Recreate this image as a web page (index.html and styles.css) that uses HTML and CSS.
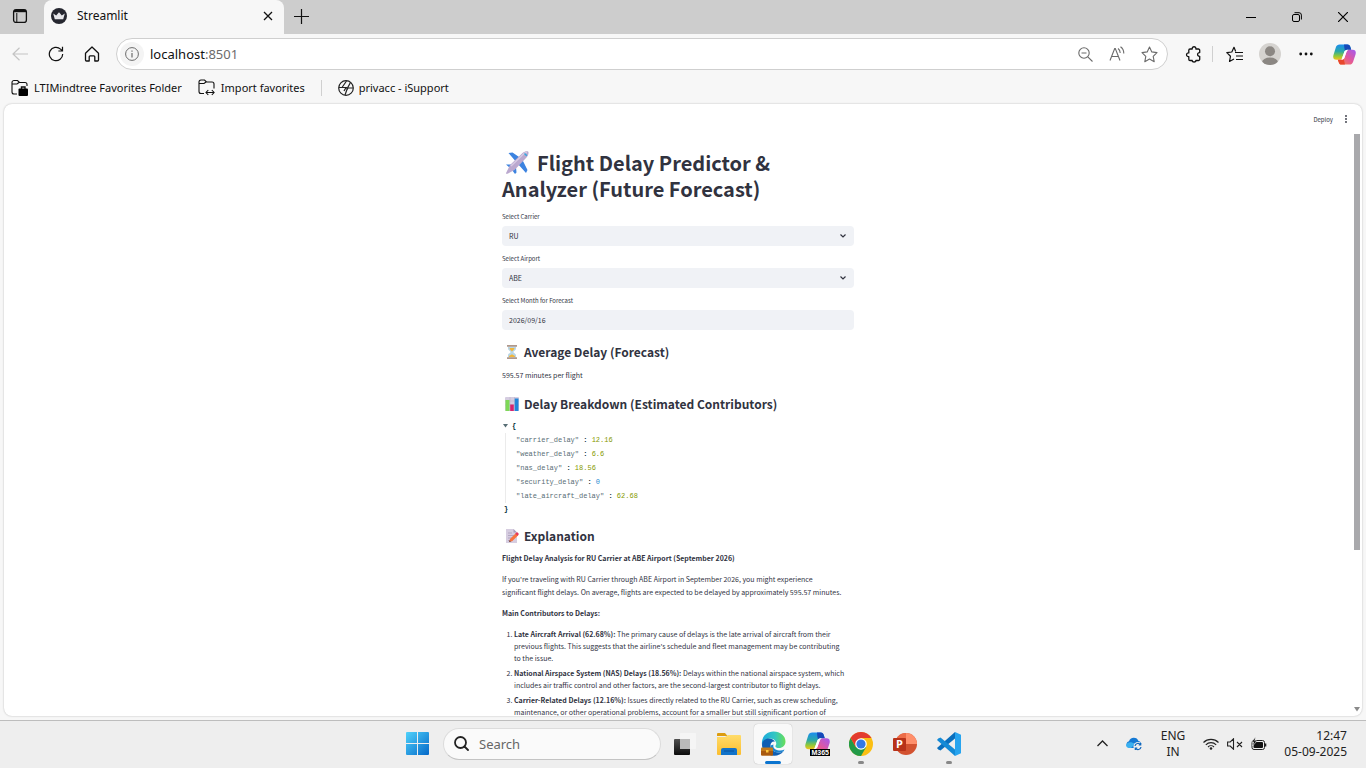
FILE: index.html
```
<!DOCTYPE html>
<html lang="en">
<head>
<meta charset="utf-8">
<title>Streamlit</title>
<link rel="stylesheet" href="styles.css">
</head>
<body>
<svg class="defs" width="0" height="0" aria-hidden="true">
  <defs>
    <linearGradient id="cpBlue" x1="0" y1="0" x2="0" y2="1"><stop offset="0" stop-color="#1b8df0"/><stop offset=".45" stop-color="#2aa8a8"/><stop offset=".75" stop-color="#8fc93a"/><stop offset="1" stop-color="#f6c21c"/></linearGradient>
    <linearGradient id="cpPink" x1="1" y1="0" x2="0" y2="1"><stop offset="0" stop-color="#a259f2"/><stop offset=".5" stop-color="#e3589b"/><stop offset="1" stop-color="#f98a3c"/></linearGradient>
    <linearGradient id="winBlue" x1="0" y1="0" x2="1" y2="1"><stop offset="0" stop-color="#4fd2fb"/><stop offset="1" stop-color="#0468c8"/></linearGradient>
    <linearGradient id="folder" x1="0" y1="0" x2="0" y2="1"><stop offset="0" stop-color="#ffdc6a"/><stop offset="1" stop-color="#fbbd2f"/></linearGradient>
    <linearGradient id="edgeTop" x1="0" y1="0" x2="1" y2="0"><stop offset="0" stop-color="#1da8dd"/><stop offset=".55" stop-color="#32c6c3"/><stop offset="1" stop-color="#69df57"/></linearGradient>
    <linearGradient id="taskBack" x1="0" y1="0" x2="0" y2="1"><stop offset="0" stop-color="#505050"/><stop offset="1" stop-color="#0b0b0b"/></linearGradient>
    <symbol id="copilot" viewBox="0 0 24 24">
      <path d="M7 1.500h8c2 0 2.600 1 3.200 3l.8 2.500h-4c-2 0-2.800 1-3.400 3L9.700 15c-.5 1.500-1.400 2.500-3.200 2.500H3.500c-3 0-3.800-2-3-5L3 4.500c.7-2 2-3 4-3z" fill="url(#cpBlue)"/>
      <path d="M11.500 1.500H15c2 0 2.600 1 3.200 3L19 7h-4c-1.200 0-2 .4-2.500 1.200L11.800 5z" fill="#1649b8"/>
      <path d="M17 22.500H9c-2 0-2.600-1-3.200-3L5 17.500h3.500c2 0 3-1 3.600-3L14 9.500c.6-1.800 1.500-2.500 3-2.500h3.500c3 0 3.800 2 3 5L21 19.500c-.7 2-2 3-4 3z" fill="url(#cpPink)"/>
      <path d="M5 17.500h3.500c1.200 0 2-.4 2.600-1.200l1.400 6.200H9c-2 0-2.600-1-3.200-3z" fill="#e8472d"/>
      <path d="M15.500 7h1c-1.400.3-2 1.200-2.500 2.500L12.100 15c-.5 1.500-1.500 2.500-3.600 2.500 1-.5 1-1.500 1.200-2.500l1.900-5c.6-2 1.700-3 3.900-3z" fill="#fff"/>
    </symbol>
  </defs>
</svg>

<header class="browser">
  <div class="tabstrip">
    <button class="icon-btn workspaces" aria-label="Tab actions">
      <svg width="16" height="16" viewBox="0 0 16 16" fill="none" stroke="#111" stroke-width="1.300"><rect x="1.600" y="1.600" width="12.800" height="12.800" rx="2.500"/><path d="M2 3h12" stroke-width="2.400"/><path d="M4.800 5v9.400" stroke-width="1"/></svg>
    </button>
    <div class="tab">
      <svg width="16" height="16" viewBox="0 0 16 16"><circle cx="8" cy="8" r="8" fill="#262730"/><path d="M2.200 5.600l3 2L8 4.200l2.800 3.400 3-2-1.600 5.600H3.800z" fill="#e8e8ec"/></svg>
      <span class="tab-title">Streamlit</span>
      <button class="icon-btn tab-close" aria-label="Close tab"><svg width="10" height="10" viewBox="0 0 10 10" stroke="#111" stroke-width="1.300"><path d="M1 1l8 8M9 1L1 9"/></svg></button>
    </div>
    <button class="icon-btn new-tab" aria-label="New tab"><svg width="15" height="15" viewBox="0 0 15 15" stroke="#111" stroke-width="1.200"><path d="M7.500 0v15M0 7.500h15"/></svg></button>
    <div class="window-controls">
      <button class="icon-btn win-btn" aria-label="Minimize"><svg width="10" height="10" viewBox="0 0 10 10" stroke="#000"><path d="M0 5.500h10"/></svg></button>
      <button class="icon-btn win-btn" aria-label="Restore"><svg width="10" height="10" viewBox="0 0 10 10" stroke="#000" fill="none"><rect x=".5" y="2.500" width="7" height="7" rx="1.500"/><path d="M2.500 .7h4.500a2.400 2.400 0 0 1 2.400 2.400v4.400"/></svg></button>
      <button class="icon-btn win-btn" aria-label="Close"><svg width="10" height="10" viewBox="0 0 10 10" stroke="#000" stroke-width="1.200"><path d="M0 0l10 10M10 0L0 10"/></svg></button>
    </div>
  </div>

  <div class="toolbar">
    <button class="icon-btn nav-btn" aria-label="Back"><svg width="16" height="14" viewBox="0 0 16 14" fill="none" stroke="#c4c4c4" stroke-width="1.200"><path d="M16 7H1M7.500 .8L1 7l6.500 6.200"/></svg></button>
    <button class="icon-btn nav-btn" aria-label="Refresh"><svg width="16" height="16" viewBox="0 0 17 17" fill="none" stroke="#111" stroke-width="1.300"><path d="M15.600 8.500A7.100 7.100 0 1 1 13.300 3.300L15.300 5.200M15.400 .8v4.500H11"/></svg></button>
    <button class="icon-btn nav-btn" aria-label="Home"><svg width="16" height="16" viewBox="0 0 16 16" fill="none" stroke="#111" stroke-width="1.300" stroke-linejoin="round"><path d="M1.500 7.200L8 1l6.500 6.200V14a1 1 0 0 1-1 1h-2.700v-4.200a1 1 0 0 0-1-1H6.200a1 1 0 0 0-1 1V15H2.500a1 1 0 0 1-1-1z"/></svg></button>
    <div class="address">
      <button class="icon-btn site-info" aria-label="Site information"><svg width="14" height="14" viewBox="0 0 14 14" fill="none" stroke="#6b6b6b"><circle cx="7" cy="7" r="6.400"/><path d="M7 6v4.500M7 3.500v1.300" stroke-width="1.200"/></svg></button>
      <a class="url" href="#">localhost<span>:8501</span></a>
      <button class="icon-btn addr-btn" aria-label="Zoom"><svg width="15" height="15" viewBox="0 0 15 15" fill="none" stroke="#6b6b6b" stroke-width="1.100"><circle cx="6" cy="6" r="5.200"/><path d="M9.800 9.800l4.700 4.700M3.500 6h5"/></svg></button>
      <button class="icon-btn addr-btn" aria-label="Read aloud"><svg width="16" height="16" viewBox="0 0 16 16" fill="none" stroke="#6b6b6b" stroke-width="1.100"><path d="M1 14.500L5.700 2.500h.6l4.700 12M2.600 10.500h6.800M9 2.500c1.500 1 2.200 2.500 2.200 4.500M11.500 .8c2.200 1.500 3.300 3.700 3.300 6.700"/></svg></button>
      <button class="icon-btn addr-btn" aria-label="Add to favorites"><svg width="17" height="17" viewBox="0 0 17 17" fill="none" stroke="#6b6b6b" stroke-width="1.100" stroke-linejoin="round"><path d="M8.500 1l2.300 4.900 5.200.7-3.800 3.700 1 5.400-4.700-2.600-4.700 2.600 1-5.400L1 6.600l5.200-.7z"/></svg></button>
    </div>
    <button class="icon-btn ext-btn" aria-label="Extensions"><svg width="17" height="17" viewBox="0 0 17 17" fill="none" stroke="#111" stroke-width="1.300" stroke-linejoin="round"><path d="M5 3h2.200c-.3-3 4-3 3.700 0H13.500a1.200 1.200 0 0 1 1.200 1.200v2.400c-2.800-.2-2.800 3.900 0 3.700v3a1.200 1.200 0 0 1-1.200 1.200h-2.600c.3 2-4 2-3.700 0H5a1.200 1.200 0 0 1-1.200-1.200v-2.700c-3 .3-3-4 0-3.700V4.200A1.200 1.200 0 0 1 5 3z"/></svg></button>
    <span class="divider"></span>
    <button class="icon-btn tool-btn" aria-label="Favorites"><svg width="17" height="17" viewBox="0 0 17 17" fill="none" stroke="#111" stroke-width="1.200" stroke-linejoin="round"><path d="M9.700 5.500L8 1.300 5.800 6l-5 .6 3.700 3.600-1 5.300L8 13M9 6.500h8M10 10h7M10 13.500h7"/></svg></button>
    <button class="icon-btn tool-btn" aria-label="Profile"><svg width="22" height="22" viewBox="0 0 22 22"><clipPath id="av"><circle cx="11" cy="11" r="11"/></clipPath><g clip-path="url(#av)"><path fill="#d5d3d0" d="M0 0h22v22H0z"/><circle cx="11" cy="8.300" r="5" fill="#8b8783"/><ellipse cx="11" cy="19.500" rx="8" ry="5" fill="#8b8783"/></g></svg></button>
    <button class="icon-btn tool-btn" aria-label="Settings and more"><svg width="14" height="4" viewBox="0 0 14 4" fill="#111"><circle cx="1.700" cy="2" r="1.400"/><circle cx="7" cy="2" r="1.400"/><circle cx="12.300" cy="2" r="1.400"/></svg></button>
    <button class="icon-btn copilot-btn" aria-label="Copilot"><svg width="23" height="23"><use href="#copilot"/></svg></button>
  </div>

  <nav class="bookmarks">
    <a href="#"><svg width="18" height="18" viewBox="0 0 18 18" fill="none" stroke="#111" stroke-width="1.100"><path d="M6 15H3a2 2 0 0 1-2-2V3.500a2 2 0 0 1 2-2h3.500l2 2H14a2 2 0 0 1 2 2V7M1 5h5l2-1.500"/><rect x="7.500" y="9.500" width="9.500" height="7.500" rx="1" fill="#000" stroke="none"/><path d="M10.500 10V8h3.500v2" stroke-width="1.400"/></svg>LTIMindtree Favorites Folder</a>
    <a href="#"><svg width="18" height="18" viewBox="0 0 18 18" fill="none" stroke="#111" stroke-width="1.100"><path d="M6 14.500H3a2 2 0 0 1-2-2V3a2 2 0 0 1 2-2h3.500l2 2H14a2 2 0 0 1 2 2v4.500M1 4.500h5L8 3M8 13.500h8M10.300 11L8 13.500l2.300 2.500M13.800 11l2.300 2.500-2.300 2.500"/></svg>Import favorites</a>
    <span class="divider"></span>
    <a href="#"><svg width="16" height="16" viewBox="0 0 16 16" fill="none" stroke="#222" stroke-width="1.200"><circle cx="8" cy="8" r="7.300"/><path d="M1 7.500h7L6 11M15 8H9.500l3-5.500M8.500 1L4 7.500M8 8h1.500L7 15M10 8l-2 3.500"/></svg>privacc - iSupport</a>
  </nav>
</header>

<div class="page">
  <div class="app-bar">
    <button class="deploy">Deploy</button>
    <button class="icon-btn" aria-label="Main menu"><svg width="4" height="8" viewBox="0 0 4 8" fill="#31333f"><circle cx="2" cy="1" r=".9"/><circle cx="2" cy="4" r=".9"/><circle cx="2" cy="7" r=".9"/></svg></button>
  </div>
  <div class="scroller">
    <main class="app">
      <div class="column">
        <h1><svg class="emoji-lg" viewBox="0 0 24 24"><path d="M3.500 2l4-.5L17 8l-4.500 4.500zM22.500 19l-1.500 3-8.500-9.500L17 8z" fill="#3c83e0"/><path d="M1 13.500l6 0-1.500 4zM10 23l1.500-1.500L11 16l-4 3z" fill="#3c83e0"/><path d="M5 14L17.500 2c2-1.800 5-2 5.800-1.300.6.900.2 3.800-1.800 5.800L9.500 19l-7 3.800c-1 .4-1.800-.2-1.200-1.200z" fill="#bba9cf"/><path d="M6 15L18.500 3c1.500-1.300 2.500-1.500 3.500-1.500" stroke="#d6cae3" stroke-width="1.500" fill="none"/><path d="M19.500 2.500l2.300 2.200" stroke="#31a7e0" stroke-width="1.500"/></svg>Flight Delay Predictor &amp;<br>Analyzer (Future Forecast)</h1>

        <div class="field">
          <label for="carrier">Select Carrier</label>
          <div class="select-wrap">
            <select id="carrier"><option>RU</option></select>
            <svg class="chevron" width="6" height="4" viewBox="0 0 6 4" fill="none" stroke="#31333f" stroke-width="1.200"><path d="M.5 .5L3 3 5.500 .5"/></svg>
          </div>
        </div>
        <div class="field">
          <label for="airport">Select Airport</label>
          <div class="select-wrap">
            <select id="airport"><option>ABE</option></select>
            <svg class="chevron" width="6" height="4" viewBox="0 0 6 4" fill="none" stroke="#31333f" stroke-width="1.200"><path d="M.5 .5L3 3 5.500 .5"/></svg>
          </div>
        </div>
        <div class="field">
          <label for="month">Select Month for Forecast</label>
          <input id="month" type="text" value="2026/09/16">
        </div>

        <h3><svg class="emoji" viewBox="0 0 14 14"><path d="M3 1.500h8v2.300c0 1.500-2.200 2-2.700 3.200.5 1.200 2.700 1.700 2.700 3.200v2.300H3v-2.300C3 8.700 5.200 8.200 5.700 7 5.200 5.800 3 5.300 3 3.800z" fill="#b9d6e6"/><path d="M4.500 3h5c0 1.800-2 2.200-2.500 3.500C6.500 5.200 4.500 4.800 4.500 3zM4 12c0-2 2.500-1.800 3-3 .5 1.200 3 1 3 3z" fill="#f2b63a"/><path d="M2 0h10v1.800H2zM2 12.200h10V14H2z" fill="#b0988a"/></svg>Average Delay (Forecast)</h3>
        <p>595.57 minutes per flight</p>

        <h3><svg class="emoji" viewBox="0 0 14 14"><rect width="14" height="14" rx="1" fill="#d5cde0"/><path d="M0 4h14M0 8h14M5 0v14M9.500 0v14" stroke="#b9afc9" stroke-width=".5"/><path d="M.5 3H4.500v11H.5z" fill="#7ed957"/><path d="M5.200 7.500h3.600V14H5.200z" fill="#d6246e"/><path d="M9.700 1.500h3.800V14H9.700z" fill="#2185d9"/></svg>Delay Breakdown (Estimated Contributors)</h3>
        <div class="json">
          <div class="json-open"><svg width="5" height="4" viewBox="0 0 5 4"><path d="M0 0h5L2.500 3.500z" fill="#586e75"/></svg><b>{</b></div>
          <ul>
            <li>"carrier_delay" <b>:</b> <span class="float">12.16</span></li>
            <li>"weather_delay" <b>:</b> <span class="float">6.6</span></li>
            <li>"nas_delay" <b>:</b> <span class="float">18.56</span></li>
            <li>"security_delay" <b>:</b> <span class="int">0</span></li>
            <li>"late_aircraft_delay" <b>:</b> <span class="float">62.68</span></li>
          </ul>
          <b class="json-close">}</b>
        </div>

        <h3><svg class="emoji" viewBox="0 0 14 14"><path d="M1 0h7.500L12 3.500V14H1z" fill="#d6cde0"/><path d="M8.500 0v3.500H12z" fill="#a99dbb"/><path d="M3 4h4M3 6.500h6M3 9h4M3 11.500h3" stroke="#a99dbb" stroke-width=".8"/><path d="M4 13l1-3 6-6 2.300 2.200-6.200 6z" fill="#f8733f"/><path d="M10.300 4.700L12 3l2 2-1.500 1.800z" fill="#e5345c"/><path d="M4 13l.6-1.800L6 12.400z" fill="#5b4b50"/></svg>Explanation</h3>
        <p><strong>Flight Delay Analysis for RU Carrier at ABE Airport (September 2026)</strong></p>
        <p>If you're traveling with RU Carrier through ABE Airport in September 2026, you might experience<br>significant flight delays. On average, flights are expected to be delayed by approximately 595.57 minutes.</p>
        <p><strong>Main Contributors to Delays:</strong></p>
        <ol>
          <li><strong>Late Aircraft Arrival (62.68%):</strong> The primary cause of delays is the late arrival of aircraft from their<br>previous flights. This suggests that the airline's schedule and fleet management may be contributing<br>to the issue.</li>
          <li><strong>National Airspace System (NAS) Delays (18.56%):</strong> Delays within the national airspace system, which<br>includes air traffic control and other factors, are the second-largest contributor to flight delays.</li>
          <li><strong>Carrier-Related Delays (12.16%):</strong> Issues directly related to the RU Carrier, such as crew scheduling,<br>maintenance, or other operational problems, account for a smaller but still significant portion of</li>
        </ol>
      </div>
    </main>
    <div class="scrollbar"><span class="thumb"></span><svg width="6" height="5" viewBox="0 0 6 5"><path d="M0 0h6L3 4.500z" fill="#8a8a8a"/></svg></div>
  </div>
</div>

<footer class="taskbar">
  <div class="dock">
    <button class="icon-btn slot" aria-label="Start"><svg width="23" height="23" viewBox="0 0 23 23" fill="url(#winBlue)"><path d="M1 0h10v11H0V1a1 1 0 0 1 1-1zM12 0h10a1 1 0 0 1 1 1v10H12zM0 12h11v11H1a1 1 0 0 1-1-1zM12 12h11v10a1 1 0 0 1-1 1H12z"/></svg></button>
    <label class="search">
      <svg width="15" height="15" viewBox="0 0 15 15" fill="none" stroke="#222" stroke-width="1.800" stroke-linecap="round"><circle cx="6.500" cy="6.500" r="5.500"/><path d="M10.500 10.500L14 14"/></svg>
      <input type="text" placeholder="Search" aria-label="Search">
    </label>
    <button class="icon-btn slot" aria-label="Task view"><svg width="22" height="22" viewBox="0 0 22 22"><rect x="0" y="6" width="16" height="16" rx="1" fill="url(#taskBack)"/><rect x="6" y="0" width="16" height="16" rx="1" fill="#f5f5f5" fill-opacity=".93"/><path d="M6 6h10v10H6z" fill="#b9b9b9"/></svg></button>
    <button class="icon-btn slot" aria-label="File Explorer"><svg width="24" height="22" viewBox="0 0 24 22"><path d="M1 0h7l2.500 3H0V1a1 1 0 0 1 1-1z" fill="#dc9c10"/><path d="M0 4h8l3-2h12a1 1 0 0 1 1 1v18a1 1 0 0 1-1 1H1a1 1 0 0 1-1-1z" fill="url(#folder)"/><path d="M4 22v-5a2 2 0 0 1 2-2h12a2 2 0 0 1 2 2v5z" fill="#1273c9"/><path d="M7 18h10" stroke="#0b529c"/></svg></button>
    <button class="icon-btn slot running active" aria-label="Microsoft Edge"><svg width="25" height="25" viewBox="0 0 25 25"><path d="M1 14C0 6 5.500 .5 12.500 .5c7 0 12 4.500 12 10 0 4-3 6.500-6.500 6.500-2.500 0-4-1-3.500-2.300.8-1 1-2 .5-3.500C14 8.500 11.500 7.500 9 7.500c-4 0-7 3-8 6.500z" fill="url(#edgeTop)"/><path d="M1 14c0-4 3-6.500 7-6.500 3 0 5 1.500 6 3-3-.5-4.500 1.500-4.500 4 0 4 3.500 7 8 7 2 0 3.500-.5 5-1.300-2.300 3-6 4.700-9.700 4.500C6 24.500 1.200 20 1 14z" fill="#0f5eb2"/><path d="M9.500 14.500c0 4 3.500 7 8 7 2 0 3.500-.5 5-1.300l1-1.700c-1.500.8-3.500 1.200-5.500 1-4-.3-6.500-3-5.500-6z" fill="#1b83cf"/><rect y="16.500" width="12" height="8" rx="1" fill="#c27a1c"/><path d="M0 20h12v3.500a1 1 0 0 1-1 1H1a1 1 0 0 1-1-1z" fill="#a8590f"/><rect x="5" y="19" width="2.500" height="2.500" fill="#ffc83d"/></svg></button>
    <button class="icon-btn slot m365" aria-label="Microsoft 365 Copilot"><svg width="25" height="25"><use href="#copilot"/></svg><span>M365</span></button>
    <button class="icon-btn slot running" aria-label="Google Chrome"><svg width="24" height="24" viewBox="0 0 24 24"><circle cx="12" cy="12" r="12" fill="#fbbf12"/><path d="M1.600 6A12 12 0 0 0 12 24l5.200-9L12 12 6.800 15z" fill="#229a48"/><path d="M12 6h10.400A12 12 0 0 0 1.600 6l5.200 9z" fill="#e33b2e"/><circle cx="12" cy="12" r="5.800" fill="#fff"/><circle cx="12" cy="12" r="4.600" fill="#3478e5"/></svg></button>
    <button class="icon-btn slot" aria-label="PowerPoint"><svg width="24" height="22" viewBox="0 0 24 22"><circle cx="13" cy="11" r="11" fill="#d35230"/><path d="M13 0a11 11 0 0 1 11 11H13z" fill="#ff8f6b"/><path d="M13 0v11H2A11 11 0 0 1 13 0z" fill="#ed6c47"/><rect y="5" width="13" height="13" rx="1" fill="#b83219"/><text x="3" y="15" class="glyph">P</text></svg></button>
    <button class="icon-btn slot running" aria-label="Visual Studio Code"><svg width="24" height="24" viewBox="0 0 24 24"><path d="M18 0l6 2.800v18.400L18 24z" fill="#27a4ef"/><path d="M18 0v6.500L3.500 18.500 1.200 17.500 0 16z" fill="#0a6fbd"/><path d="M18 24v-6.500L3.500 5.500 1.200 6.500 0 8z" fill="#148ad6"/></svg></button>
  </div>
  <div class="tray">
    <button class="icon-btn" aria-label="Show hidden icons"><svg width="11" height="7" viewBox="0 0 11 7" fill="none" stroke="#222" stroke-width="1.300"><path d="M.5 6l5-5 5 5"/></svg></button>
    <button class="icon-btn onedrive" aria-label="OneDrive"><svg width="17" height="14" viewBox="0 0 17 14"><path d="M3.500 11A3.500 3.500 0 0 1 3 4.200 5 5 0 0 1 12.500 4 4 4 0 0 1 15.500 8v3z" fill="#1479d4"/><path d="M0 8c1-3 5-4 9-1l-4 4H3.500C1.500 11 0 10 0 8z" fill="#3ab0f0"/><circle cx="12" cy="9.500" r="4.500" fill="#eee"/><path d="M9 9a3 3 0 0 1 5.500-1.200M15 10a3 3 0 0 1-5.500 1.200M14.700 6v2h-2M9.300 13v-2h2" fill="none" stroke="#1268bd" stroke-width="1.200"/></svg></button>
    <span class="lang">ENG<br>IN</span>
    <svg width="16" height="12" viewBox="0 0 16 12" fill="none" stroke="#222" stroke-width="1.100"><path d="M.5 4.500a10.500 10.500 0 0 1 15 0M2.800 6.800a7.300 7.300 0 0 1 10.400 0M5 9a4.300 4.300 0 0 1 6 0"/><circle cx="8" cy="10.500" r="1.300" fill="#222" stroke="none"/></svg>
    <svg width="16" height="12" viewBox="0 0 16 12" fill="none" stroke="#222" stroke-width="1.100"><path d="M.6 4h2.600L6.500 .8v10.400L3.200 8H.6zM10 4l5 5M15 4l-5 5"/></svg>
    <svg width="16" height="14" viewBox="0 0 16 14"><rect x="1" y="3.500" width="12.500" height="9" rx="2" fill="none" stroke="#222"/><rect x="2.500" y="5" width="9.500" height="6" rx="1" fill="#111"/><path d="M14.500 6.500v3" stroke="#222" stroke-width="1.600"/><path d="M4.500 0L.5 5h2.200L1.500 9 6 4H3.800z" fill="#111" stroke="#eee" stroke-width=".6"/></svg>
    <span class="clock">12:47<br>05-09-2025</span>
  </div>
</footer>
</body>
</html>
```
FILE: styles.css
```
* { box-sizing: border-box; }

body {
  margin: 0;
  height: 100vh;
  display: flex;
  flex-direction: column;
  overflow: hidden;
  background: #f7f7f7;
  color: #111;
  font: 12px/16px "Noto Sans", "Open Sans", sans-serif;
}

.defs { position: absolute; }
svg { display: block; flex: none; }
a { color: inherit; text-decoration: none; }

button, input, select { font: inherit; color: inherit; }

.icon-btn {
  display: flex;
  align-items: center;
  justify-content: center;
  flex: none;
  padding: 0;
  border: 0;
  background: none;
}

.divider { width: 1px; height: 16px; background: #d0d0d0; flex: none; }

/* Tab strip */
.tabstrip { display: flex; align-items: stretch; height: 34px; background: #cdcdcd; }
.workspaces { width: 40px; padding-bottom: 2px; }
.tab {
  display: flex;
  align-items: center;
  width: 240px;
  margin-left: 4px;
  padding: 0 11px 2px 7px;
  gap: 10px;
  border-radius: 8px 8px 0 0;
  background: #f7f7f7;
}
.tab-title { flex: 1; }
.new-tab { width: 35px; padding-bottom: 2px; }
.window-controls { display: flex; margin-left: auto; }
.win-btn { width: 46px; }

/* Address row */
.toolbar { display: flex; align-items: center; height: 40px; padding: 0 6px 0 2px; }
.nav-btn { width: 36px; height: 32px; }
.address {
  display: flex;
  align-items: center;
  flex: 1;
  height: 32px;
  margin: 0 6px;
  padding: 0 2px 0 3px;
  border: 1px solid #cfcfcf;
  border-radius: 16px;
  background: #fff;
}
.site-info { width: 24px; height: 24px; border-radius: 12px; background: #f4f4f4; }
.url { flex: 1; margin-left: 6px; font-size: 13px; line-height: 18px; }
.url span { color: #6b6b6b; }
.addr-btn { width: 32px; height: 28px; }
.ext-btn { width: 38px; height: 32px; }
.tool-btn { width: 36px; height: 32px; }
.toolbar .divider { margin-right: 3px; }
.copilot-btn { width: 32px; height: 32px; margin-left: 4px; }

/* Favourites row */
.bookmarks { display: flex; align-items: center; height: 28px; padding-left: 11px; gap: 16px; }
.bookmarks a { display: flex; align-items: center; gap: 5px; font-size: 11px; }

/* Page */
.page {
  flex: 1;
  min-height: 0;
  display: flex;
  flex-direction: column;
  margin: 2px 4px 4px;
  border-radius: 8px;
  background: #fff;
  box-shadow: 0 0 2px #0004;
  overflow: hidden;
  color: #31333f;
  font: 7px/13px "Noto Sans CJK SC", "Noto Sans", sans-serif;
}
.app-bar { display: flex; align-items: center; justify-content: flex-end; height: 30px; padding-right: 14px; gap: 11px; }
.deploy { padding: 0; border: 0; background: none; font-size: 6px; }
.scroller { flex: 1; min-height: 0; display: flex; }
.app { flex: 1; overflow: hidden; }
.column { max-width: 352px; margin: 0 auto; padding-top: 16px; }

h1 { margin: 0 0 9px; font-size: 20px; line-height: 26px; font-weight: 700; }
h3 {
  display: flex;
  align-items: center;
  margin: 12px 0 7px;
  font-size: 12px;
  line-height: 20px;
  font-weight: 600;
}
.emoji-lg { display: inline-block; width: 24px; height: 24px; margin: 0 8px 0 3px; vertical-align: -4px; }
.emoji { width: 14px; height: 14px; margin: 0 5px 0 3px; }

.field { display: flex; flex-direction: column; gap: 3px; margin-bottom: 7px; }
.field label { font-size: 6px; line-height: 12px; }
.select-wrap { position: relative; }
.field select, .field input {
  display: block;
  width: 100%;
  height: 20px;
  padding: 0 7px;
  border: 0;
  border-radius: 4px;
  background: #f0f2f6;
  appearance: none;
  outline: 0;
}
.chevron { position: absolute; right: 8px; top: 8px; pointer-events: none; }

p { margin: 0 0 8px; }
strong { font-weight: 700; }

.json { font: 7px/14px "Liberation Mono", monospace; color: #586e75; margin-top: -2px; }
.json b { color: #002b36; }
.json-open { display: flex; align-items: center; gap: 4px; padding-left: 1px; }
.json ul { margin: 0 0 0 3px; padding: 0 0 0 10px; border-left: 1px solid #ebebeb; list-style: none; }
.json-close { display: block; padding-left: 2px; line-height: 13px; }
.float { color: #859900; }
.int { color: #268bd2; }
.json + h3 { margin: 10px 0 6px; }

ol { margin: 0; padding-left: 12px; line-height: 12px; }
ol li { margin-bottom: 3px; }

.scrollbar { display: flex; flex-direction: column; justify-content: space-between; align-items: center; width: 10px; padding-bottom: 4px; }
.thumb { width: 6px; height: 72%; background: #a9a9ac; }

/* Taskbar */
.taskbar {
  display: grid;
  grid-template-columns: 1fr auto 1fr;
  align-items: center;
  height: 48px;
  padding-bottom: 2px;
  border-top: 1px solid #bdbdbd;
  background: #eee;
}
.dock { grid-column: 2; display: flex; align-items: center; }
.slot { position: relative; width: 44px; height: 40px; }
.search {
  display: flex;
  align-items: center;
  gap: 10px;
  width: 218px;
  height: 32px;
  margin: 0 2px 0 4px;
  padding: 0 10px;
  border: 1px solid #dcdcdc;
  border-bottom-color: #c4c4c4;
  border-radius: 16px;
  background: #fafafa;
}
.search input { flex: 1; min-width: 0; padding: 0; border: 0; outline: 0; background: none; font-size: 13px; }
.search input::placeholder { color: #666; opacity: 1; }
.active { width: 38px; margin: 0 3px; border-radius: 4px; background: #f9f9f9; box-shadow: 0 0 1px #0005; }
.running::after {
  content: "";
  position: absolute;
  bottom: 0;
  width: 6px;
  height: 3px;
  border-radius: 2px;
  background: #888;
}
.active::after { width: 16px; background: #0b74cf; }
.m365 span {
  position: absolute;
  right: 9px;
  bottom: 8px;
  padding: 0 1px;
  background: #000;
  color: #fff;
  font: 700 7px/7px "Liberation Sans", sans-serif;
}
.glyph { font: 700 11px "Open Sans", sans-serif; fill: #fff; }
.tray { grid-column: 3; display: flex; align-items: center; justify-content: flex-end; gap: 8px; padding-right: 19px; color: #222; }
.onedrive { margin: 0 10px; }
.lang { margin-right: 10px; text-align: center; }
.clock { margin-left: 9px; text-align: right; }
```
